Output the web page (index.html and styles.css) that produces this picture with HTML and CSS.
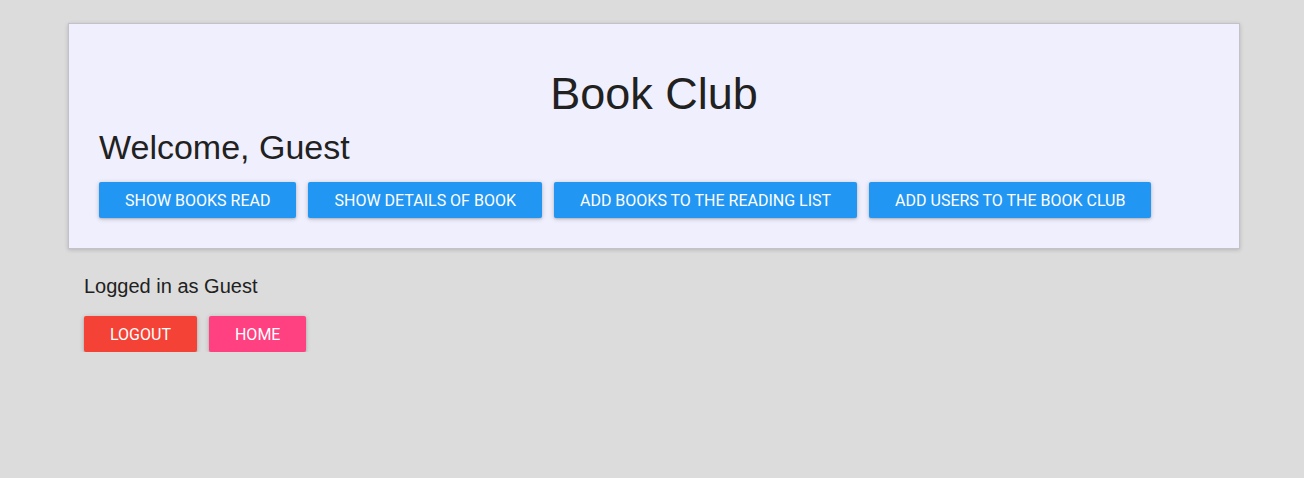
FILE: index.html
```html
<!DOCTYPE html>
<html lang="en">
<head>
<meta charset="utf-8">
<title>Book Club</title>
<link rel="stylesheet" href="styles.css">
</head>
<body>
  <div class="page">
    <section class="card">
      <h1 class="title">Book Club</h1>
      <h2 class="welcome">Welcome, Guest</h2>
      <div class="actions">
        <button class="btn btn-blue">Show books read</button>
        <button class="btn btn-blue">Show details of book</button>
        <button class="btn btn-blue">Add books to the reading list</button>
        <button class="btn btn-blue">Add users to the book club</button>
      </div>
    </section>
    <section class="session">
      <p class="logged">Logged in as Guest</p>
      <div class="actions">
        <button class="btn btn-red">Logout</button>
        <button class="btn btn-pink">Home</button>
      </div>
    </section>
  </div>
</body>
</html>
```

FILE: styles.css
```css
html, body {
  margin: 0;
  padding: 0;
  background: #dcdcdc;
}

body {
  font-family: "Liberation Sans", Arial, sans-serif;
  color: #212121;
}

.page {
  padding: 23px 64px 0 68px;
}

.card {
  background: #f0effe;
  border: 1px solid #c2c2c8;
  box-shadow: 0 1px 4px rgba(0, 0, 0, 0.18);
  padding: 0 30px 30px 30px;
}

.title {
  margin: 44px 0 0 0;
  font-size: 45px;
  line-height: 52px;
  font-weight: 400;
  text-align: center;
}

.welcome {
  margin: 8px 0 0 0;
  font-size: 34px;
  line-height: 39px;
  font-weight: 400;
}

.actions {
  display: flex;
  gap: 12px;
  margin-top: 15px;
}

.btn {
  height: 36px;
  padding: 0 26px;
  border: none;
  border-radius: 2px;
  color: #fff;
  font-family: Roboto, "Liberation Sans", sans-serif;
  font-size: 16px;
  font-weight: 400;
  letter-spacing: 0;
  text-transform: uppercase;
  box-shadow: 0 1px 5px rgba(0, 0, 0, 0.2), 0 1px 2px rgba(0, 0, 0, 0.14);
  cursor: pointer;
}

.btn-blue { background: #2196f3; }
.btn-red { background: #f44336; }
.btn-pink { background: #ff4081; }

.session {
  padding: 26px 16px 0 16px;
}

.logged {
  margin: 0;
  font-size: 20px;
  line-height: 23px;
}

.session .actions {
  margin-top: 18px;
  gap: 12px;
}
```
